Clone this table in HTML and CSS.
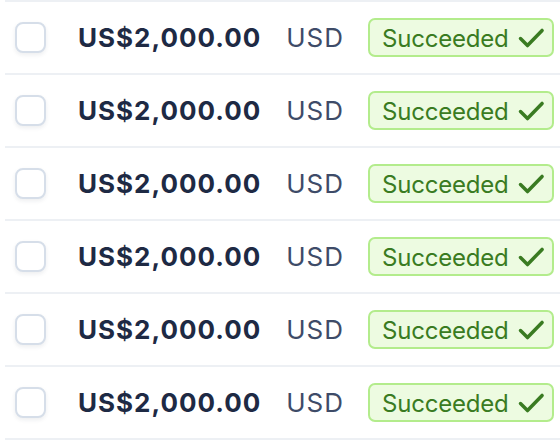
FILE: index.html
```html
<!DOCTYPE html>
<html lang="en">
<head>
    <meta charset="UTF-8">
    <meta name="viewport" content="width=device-width, initial-scale=1.0">
    <title>Payments</title>
    <link rel="stylesheet" href="styles.css">
</head>
<body>

    <div class="payments">
        <div class="row">
            <label class="check"><input type="checkbox"><span class="box"></span></label>
            <span class="amount">US$2,000.00</span>
            <span class="currency">USD</span>
            <span class="badge">Succeeded
                <svg viewBox="0 0 24 24" width="28" height="28"><path d="M3 12.5l6 6L21.5 5.5" fill="none" stroke="currentColor" stroke-width="3" stroke-linecap="round" stroke-linejoin="round"/></svg>
            </span>
        </div>
        <div class="row">
            <label class="check"><input type="checkbox"><span class="box"></span></label>
            <span class="amount">US$2,000.00</span>
            <span class="currency">USD</span>
            <span class="badge">Succeeded
                <svg viewBox="0 0 24 24" width="28" height="28"><path d="M3 12.5l6 6L21.5 5.5" fill="none" stroke="currentColor" stroke-width="3" stroke-linecap="round" stroke-linejoin="round"/></svg>
            </span>
        </div>
        <div class="row">
            <label class="check"><input type="checkbox"><span class="box"></span></label>
            <span class="amount">US$2,000.00</span>
            <span class="currency">USD</span>
            <span class="badge">Succeeded
                <svg viewBox="0 0 24 24" width="28" height="28"><path d="M3 12.5l6 6L21.5 5.5" fill="none" stroke="currentColor" stroke-width="3" stroke-linecap="round" stroke-linejoin="round"/></svg>
            </span>
        </div>
        <div class="row">
            <label class="check"><input type="checkbox"><span class="box"></span></label>
            <span class="amount">US$2,000.00</span>
            <span class="currency">USD</span>
            <span class="badge">Succeeded
                <svg viewBox="0 0 24 24" width="28" height="28"><path d="M3 12.5l6 6L21.5 5.5" fill="none" stroke="currentColor" stroke-width="3" stroke-linecap="round" stroke-linejoin="round"/></svg>
            </span>
        </div>
        <div class="row">
            <label class="check"><input type="checkbox"><span class="box"></span></label>
            <span class="amount">US$2,000.00</span>
            <span class="currency">USD</span>
            <span class="badge">Succeeded
                <svg viewBox="0 0 24 24" width="28" height="28"><path d="M3 12.5l6 6L21.5 5.5" fill="none" stroke="currentColor" stroke-width="3" stroke-linecap="round" stroke-linejoin="round"/></svg>
            </span>
        </div>
        <div class="row">
            <label class="check"><input type="checkbox"><span class="box"></span></label>
            <span class="amount">US$2,000.00</span>
            <span class="currency">USD</span>
            <span class="badge">Succeeded
                <svg viewBox="0 0 24 24" width="28" height="28"><path d="M3 12.5l6 6L21.5 5.5" fill="none" stroke="currentColor" stroke-width="3" stroke-linecap="round" stroke-linejoin="round"/></svg>
            </span>
        </div>
    </div>

</body>
</html>
```

FILE: styles.css
```css
body {
    margin: 0;
    font-family: Inter, "Noto Sans", sans-serif;
    background-color: #ffffff;
}

.payments {
    margin-left: 5px;
    border-top: 2px solid #edf0f4;
}

.row {
    display: flex;
    align-items: center;
    height: 71px;
    padding-left: 10px;
    border-bottom: 2px solid #edf0f4;
}

.check {
    display: inline-block;
    cursor: pointer;
}

.check input {
    display: none;
}

.check .box {
    display: block;
    width: 27px;
    height: 27px;
    border: 2px solid #d6dee9;
    border-radius: 8px;
    background-color: white;
    box-shadow: 0 2px 4px rgba(30, 42, 68, 0.08);
}

.amount {
    margin-left: 32px;
    font-size: 26px;
    font-weight: 700;
    letter-spacing: 1px;
    color: #1e2a44;
}

.currency {
    margin-left: 25px;
    font-size: 26px;
    letter-spacing: 1px;
    color: #3e4b68;
}

.badge {
    display: flex;
    align-items: center;
    gap: 8px;
    margin-left: 24px;
    height: 34px;
    padding: 1px 7px 0 12px;
    border: 2px solid #b3ec8c;
    border-radius: 7px;
    background-color: #edfbe1;
    color: #3a7b22;
    font-size: 24px;
    letter-spacing: -0.2px;
}
```
